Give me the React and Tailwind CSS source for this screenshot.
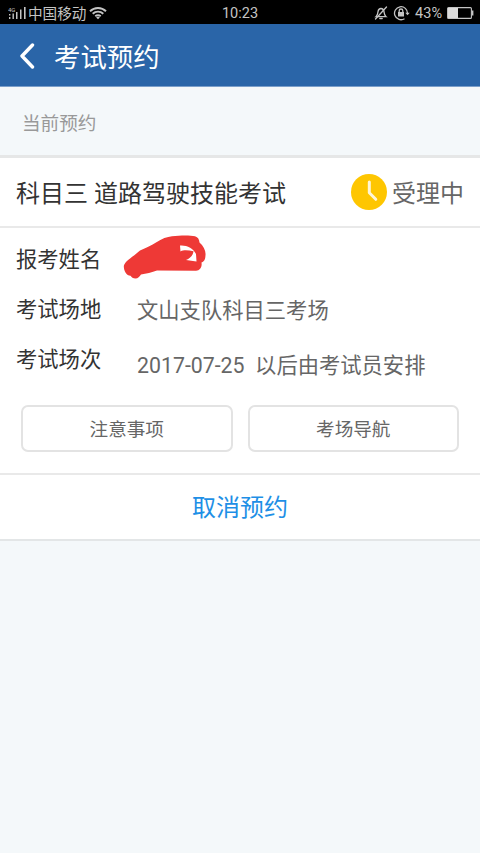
const rows = [
  { label: '报考姓名', value: null },
  { label: '考试场地', value: '文山支队科目三考场' },
  { label: '考试场次', value: '2017-07-25  以后由考试员安排' },
]

const actions = ['注意事项', '考场导航']

function SignalIcon() {
  return (
    <svg viewBox="0 0 19 14" width="19" height="14" fill="#c4c4c4">
      <text x="0" y="5.5" fontSize="6" fontFamily="Roboto, sans-serif">4G</text>
      <rect x="1" y="8" width="1.4" height="1.5" />
      <rect x="1" y="11" width="1.4" height="2" />
      <rect x="4.5" y="7.5" width="1.4" height="5.5" />
      <rect x="8" y="6" width="1.5" height="7" />
      <rect x="12" y="3.5" width="1.5" height="9.5" />
      <rect x="16" y="1" width="1.6" height="12" />
    </svg>
  )
}

function WifiIcon() {
  return (
    <svg viewBox="0 0 18 14" width="18" height="14" fill="none" stroke="#c4c4c4" strokeWidth="1.9">
      <path d="M1 5.2a11.5 11.5 0 0 1 16 0" />
      <path d="M3.7 7.8a7.6 7.6 0 0 1 10.6 0" />
      <path d="M6.3 10.3a3.9 3.9 0 0 1 5.4 0" />
      <path d="M7.2 11.4L9 13.3l1.8-1.9a2.6 2.6 0 0 0-3.6 0z" fill="#c4c4c4" stroke="none" />
    </svg>
  )
}

function MuteIcon() {
  return (
    <svg viewBox="0 0 14 14" width="14" height="14" fill="none" stroke="#c4c4c4" strokeWidth="1.3" strokeLinecap="round">
      <path d="M2 10.7c1.7-1.4 1.8-3 2-5C4.3 3.6 5.5 2.5 7 2.5s2.7 1.1 3 3.2c.2 2 .3 3.6 2 5z" />
      <path d="M5.8 12.5h2.4M12.5 1L1.5 13" />
    </svg>
  )
}

function RotationLockIcon() {
  return (
    <svg viewBox="0 0 17 16" width="17" height="16" fill="none" stroke="#c4c4c4" strokeWidth="1.3">
      <path d="M11.5 13.7A6.5 6.5 0 1 1 14.5 8.5" />
      <path d="M12.3 7.7h4.4l-2.2 2.6z" fill="#c4c4c4" stroke="none" />
      <rect x="5" y="7" width="6" height="4.5" fill="#c4c4c4" stroke="none" />
      <path d="M6.2 7V5.8a1.8 1.8 0 0 1 3.6 0V7" />
    </svg>
  )
}

function BatteryIcon() {
  return (
    <svg viewBox="0 0 27 12" width="27" height="12">
      <rect x=".6" y=".6" width="23.8" height="10.8" rx="1" fill="none" stroke="#c4c4c4" strokeWidth="1.1" />
      <rect x="1" y="1" width="10" height="10" fill="#dcdcdc" />
      <rect x="25" y="3.5" width="1.4" height="5" fill="#c4c4c4" />
    </svg>
  )
}

function ClockBadge() {
  return (
    <svg viewBox="0 0 36 36" width="36" height="36">
      <circle cx="18" cy="18" r="18" fill="#fec601" />
      <path d="M18.3 8V18.8L24.8 25.3" fill="none" stroke="#fff6d8" strokeWidth="3" strokeLinecap="round" strokeLinejoin="round" />
    </svg>
  )
}

function Scribble() {
  return (
    <svg viewBox="0 0 84 46" width="84" height="46" className="block">
      <path
        fill="#ee3936"
        fillRule="evenodd"
        d="M.8 31C1.5 27.5 6 24 11 20.5L17 15.5C23 13 29 10 33 7.5C39 3.5 44 2 49 1.3C57 .3 67 .2 72 1.2C75 2 76.3 4.5 76.5 7.5C80.5 11 83 16 82.5 20C82.3 23.5 82 26 78.5 27.5C79.3 32 77 35.5 73 35.7L34 35.5C29 37.5 23 38.7 18 39.5C16.5 41.5 15 43.5 12.5 43.5C10 43.5 8.5 42.3 7.5 40.8C3.5 40.8 .8 36 .8 31Z M57 10.5L57.5 16.5C61 14.5 66 15.5 70.5 16.3C70 20.5 67 23.5 63 25L73.5 26.5L73 19C70.5 13 63 9.8 57 10.5Z"
      />
    </svg>
  )
}

export default function App() {
  return (
    <div className="flex h-[853px] w-[480px] flex-col overflow-hidden bg-[#f4f8fa] font-['Roboto','Noto_Sans_CJK_SC',sans-serif] text-[#333]">
      {/* Status bar */}
      <div className="grid h-6 shrink-0 grid-cols-3 items-center bg-black text-[14.5px] leading-6 text-[#c4c4c4]">
        <div className="flex items-center pl-2">
          <SignalIcon />
          <span className="mr-[3px] ml-px pt-px text-[14.6px]">中国移动</span>
          <WifiIcon />
        </div>
        <span className="pt-[2px] text-center">10:23</span>
        <div className="flex items-center justify-end pr-[6px]">
          <MuteIcon />
          <span className="ml-[5px]"><RotationLockIcon /></span>
          <span className="mr-[5px] ml-[5px] pt-px">43%</span>
          <BatteryIcon />
        </div>
      </div>

      {/* Header */}
      <header className="flex h-[63px] shrink-0 items-center border-b border-[#7b9fca] bg-[#2a65a8] pt-[2px] pl-5 text-white">
        <svg viewBox="0 0 15 26" width="15" height="26" fill="none" stroke="currentColor" strokeWidth="3.4" strokeLinecap="round" strokeLinejoin="round">
          <path d="M12.5 2L2 13l10.5 11" />
        </svg>
        <h1 className="ml-[19px] pt-[5px] text-[26.4px] leading-none">考试预约</h1>
      </header>

      <div className="flex h-[71px] shrink-0 items-center border-b-[3px] border-[#e6e7e7] pt-[7px] pl-[22px] text-[18.6px] text-[#999]">
        当前预约
      </div>

      {/* Booking card */}
      <section className="shrink-0 border-b-2 border-[#e3e6e7] bg-white">
        <div className="flex h-[70px] items-center justify-between border-b-2 border-[#e9e9e9] pr-4 pl-4 text-[24px]">
          <h2 className="pt-1">科目三 道路驾驶技能考试</h2>
          <div className="flex items-center gap-[5px] text-[#666]">
            <ClockBadge />
            <span className="pt-1">受理中</span>
          </div>
        </div>

        <dl className="flex h-[177px] flex-col pt-[7px] pl-4 text-[21.3px]">
          {rows.map(({ label, value }, i) => (
            <div key={label} className="flex h-[50px]">
              <dt className={i === 0 ? 'w-[107px] leading-[49px]' : 'w-[121px] leading-[49px]'}>{label}</dt>
              <dd className={i === 2 ? 'pt-[5px] leading-[51px] whitespace-pre text-[#666]' : 'leading-[51px] text-[#666]'}>
                {value ?? <Scribble />}
              </dd>
            </div>
          ))}
        </dl>

        <div className="flex h-[70px] gap-[15px] border-b-2 border-[#e9e9e9] px-[21px] pb-[21px]">
          {actions.map((label) => (
            <button key={label} className="flex-1 rounded-[7px] border-2 border-[#e3e3e3] pt-1 text-[18.6px] text-[#666]">
              {label}
            </button>
          ))}
        </div>

        <button className="h-[64px] w-full pt-[2px] text-[24px] text-[#1e8fe6]">取消预约</button>
      </section>
    </div>
  )
}
